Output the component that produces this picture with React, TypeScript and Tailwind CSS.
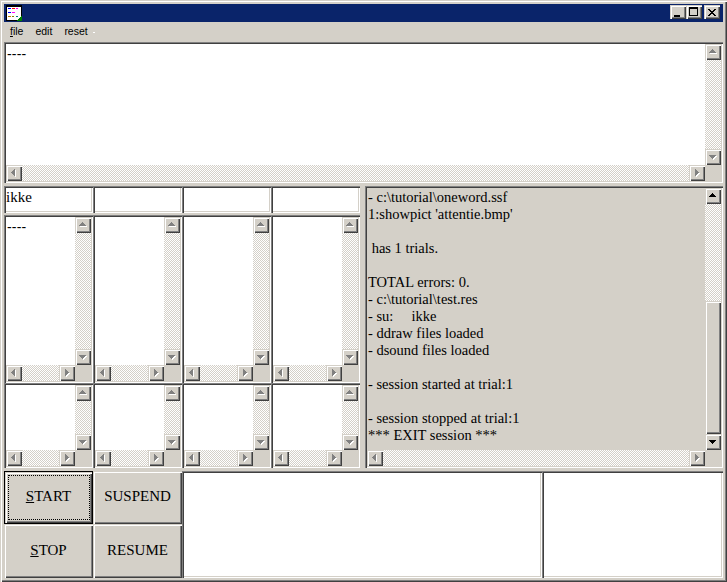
import React from 'react';

const sunken =
  'shadow-[inset_1px_1px_0_#808080,inset_2px_2px_0_#404040,inset_-1px_-1px_0_#ffffff,inset_-2px_-2px_0_#d4d0c8]';
const raised =
  'shadow-[inset_1px_1px_0_#d4d0c8,inset_2px_2px_0_#ffffff,inset_-1px_-1px_0_#404040,inset_-2px_-2px_0_#808080]';
const dither = 'bg-[repeating-conic-gradient(#ffffff_0_25%,#d4d0c8_0_50%)] bg-[length:2px_2px]';

type Dir = 'up' | 'down' | 'left' | 'right';

const rotation: Record<Dir, number> = { up: 0, right: 90, down: 180, left: 270 };

const Triangle = ({ dir, fill }: { dir: Dir; fill: string }) => (
  <g transform={`rotate(${rotation[dir]} 7.5 7.5)`} fill={fill}>
    <rect x="7" y="5" width="1" height="1" />
    <rect x="6" y="6" width="3" height="1" />
    <rect x="5" y="7" width="5" height="1" />
    <rect x="4" y="8" width="7" height="1" />
  </g>
);

const ArrowButton = ({ dir, active = false }: { dir: Dir; active?: boolean }) => (
  <div className={`w-4 h-4 shrink-0 bg-[#d4d0c8] ${raised}`}>
    <svg width="16" height="16" viewBox="0 0 16 16" shapeRendering="crispEdges">
      {!active && (
        <g transform="translate(1 1)">
          <Triangle dir={dir} fill="#ffffff" />
        </g>
      )}
      <Triangle dir={dir} fill={active ? '#000000' : '#808080'} />
    </svg>
  </div>
);

const VScrollBar = ({ active = false }: { active?: boolean }) => (
  <div className="w-4 shrink-0 flex flex-col">
    <ArrowButton dir="up" active={active} />
    {active ? (
      <>
        <div className={`h-[97px] ${dither}`} />
        <div className={`flex-1 bg-[#d4d0c8] ${raised}`} />
      </>
    ) : (
      <div className={`flex-1 ${dither}`} />
    )}
    <ArrowButton dir="down" active={active} />
  </div>
);

const ScrollBox = ({
  children,
  className = '',
  active = false,
  bg = 'bg-white',
}: {
  children?: React.ReactNode;
  className?: string;
  active?: boolean;
  bg?: string;
}) => (
  <div className={`p-[2px] flex flex-col ${sunken} ${className}`}>
    <div className="flex flex-1 min-h-0">
      <div className={`flex-1 min-w-0 overflow-hidden ${bg}`}>{children}</div>
      <VScrollBar active={active} />
    </div>
    <div className="flex h-4 shrink-0">
      <ArrowButton dir="left" />
      <div className={`flex-1 ${dither}`} />
      <ArrowButton dir="right" />
      <div className="w-4 bg-[#d4d0c8]" />
    </div>
  </div>
);

const Dashes = () => (
  <div className="pl-[1px] pt-[2px] text-[14px] leading-[17px] tracking-[0.2px] font-['Liberation_Sans',sans-serif] text-black">
    ----
  </div>
);

const SunkenField = ({ className = '', children }: { className?: string; children?: React.ReactNode }) => (
  <div className={`p-[2px] ${sunken} ${className}`}>
    <div className="w-full h-full bg-white">{children}</div>
  </div>
);

const TitleButton = ({ children, className = '' }: { children: React.ReactNode; className?: string }) => (
  <div className={`w-4 h-[14px] bg-[#d4d0c8] ${raised} ${className}`}>
    <svg width="16" height="14" viewBox="0 0 16 14" shapeRendering="crispEdges">
      {children}
    </svg>
  </div>
);

const AppIcon = () => (
  <svg width="16" height="16" viewBox="0 0 16 16" shapeRendering="crispEdges">
    <rect x="0.5" y="0.5" width="15" height="15" fill="#ffffff" stroke="#000000" />
    <rect x="1" y="1" width="14" height="1" fill="#000000" />
    <rect x="2" y="3" width="3" height="1" fill="#0000ff" />
    <rect x="6" y="3" width="3" height="1" fill="#ff0000" />
    <rect x="10" y="3" width="2" height="1" fill="#ff00ff" />
    <rect x="2" y="7" width="3" height="1" fill="#0000ff" />
    <rect x="6" y="7" width="3" height="1" fill="#ff00ff" />
    <rect x="2" y="11" width="3" height="1" fill="#c08000" />
    <rect x="6" y="11" width="2" height="1" fill="#808000" />
    <rect x="10" y="11" width="2" height="1" fill="#008080" />
    <path d="M16 10 V16 H10 Z" fill="#008000" />
  </svg>
);

const logLines = [
  '- c:\\tutorial\\oneword.ssf',
  "1:showpict 'attentie.bmp'",
  '',
  ' has 1 trials.',
  '',
  'TOTAL errors: 0.',
  '- c:\\tutorial\\test.res',
  '- su:     ikke',
  '- ddraw files loaded',
  '- dsound files loaded',
  '',
  '- session started at trial:1',
  '',
  '- session stopped at trial:1',
  '*** EXIT session ***',
];

const columns = [0, 1, 2, 3];

const CommandButton = ({
  label,
  hotkey,
  isDefault = false,
}: {
  label: string;
  hotkey?: string;
  isDefault?: boolean;
}) => (
  <div className={`h-full ${isDefault ? 'border border-black' : ''}`}>
    <div className={`h-full pb-[2px] flex items-center justify-center bg-[#d4d0c8] ${raised}`}>
      {isDefault ? (
        <div className="w-[82px] h-[45px] mt-[2px] pb-[2px] border border-dotted border-black flex items-center justify-center">
          <span>
            <span className="underline">{hotkey}</span>
            {label}
          </span>
        </div>
      ) : (
        <span>
          {hotkey && <span className="underline">{hotkey}</span>}
          {label}
        </span>
      )}
    </div>
  </div>
);

export default function App() {
  return (
    <div className="w-[727px] h-[582px] p-1 flex flex-col bg-[#d4d0c8] overflow-hidden shadow-[inset_1px_1px_0_#d4d0c8,inset_2px_2px_0_#ffffff,inset_-1px_-1px_0_#404040,inset_-2px_-2px_0_#808080]">
      <div className="h-[18px] shrink-0 flex items-start justify-between pt-[1px] pl-[2px] pr-[3px] bg-[#0a246a]">
        <AppIcon />
        <div className="flex">
          <TitleButton>
            <rect x="4" y="10" width="6" height="2" fill="#000000" />
          </TitleButton>
          <TitleButton>
            <path d="M3 2 H12 V11 H3 Z M4 4 V10 H11 V4 Z" fill="#000000" fillRule="evenodd" />
          </TitleButton>
          <TitleButton className="ml-[2px]">
            {[0, 1, 2, 3, 4, 5, 6].map((i) => (
              <g key={i} fill="#000000">
                <rect x={4 + i} y={4 + i} width="2" height="1" />
                <rect x={10 - i} y={4 + i} width="2" height="1" />
              </g>
            ))}
          </TitleButton>
        </div>
      </div>

      <div className="h-5 shrink-0 flex items-center pl-[6px] gap-3 text-[10.5px] font-['Liberation_Sans',sans-serif] text-black">
        <span>
          <span className="underline">f</span>ile
        </span>
        <span>edit</span>
        <span>reset</span>
        <div className="w-[2px] h-[1px] -ml-[7px] bg-white" />
      </div>

      <ScrollBox className="h-[141px] shrink-0">
        <Dashes />
      </ScrollBox>

      <div className="h-[282px] shrink-0 mt-[3px] flex gap-[5px]">
        <div className="w-[356px] shrink-0 flex flex-col">
          <div className="h-[28px] mb-[1px] shrink-0 grid grid-cols-4">
            <SunkenField className="h-[27px]">
              <div className="text-[15px] leading-[18px] font-['Liberation_Serif',serif] text-black">ikke</div>
            </SunkenField>
            <SunkenField className="h-[27px]" />
            <SunkenField className="h-[27px]" />
            <SunkenField className="h-[27px]" />
          </div>
          <div className="h-[168px] shrink-0 grid grid-cols-4">
            {columns.map((col) => (
              <ScrollBox key={col}>{col === 0 && <Dashes />}</ScrollBox>
            ))}
          </div>
          <div className="flex-1 grid grid-cols-4">
            {columns.map((col) => (
              <ScrollBox key={col} />
            ))}
          </div>
        </div>

        <ScrollBox className="flex-1" bg="bg-[#d4d0c8]" active>
          <div className="pl-[1px] pt-[1px] text-[14.5px] leading-[17px] font-['Liberation_Serif',serif] text-black whitespace-pre">
            {logLines.map((line, i) => (
              <div key={i} className="h-[17px]">
                {line}
              </div>
            ))}
          </div>
        </ScrollBox>
      </div>

      <div className="h-[107px] shrink-0 mt-[3px] flex text-[15px] font-['Liberation_Serif',serif] text-black">
        <div className="w-[178px] shrink-0 grid grid-cols-[89px_89px] grid-rows-[53px_54px]">
          <CommandButton label="TART" hotkey="S" isDefault />
          <CommandButton label="SUSPEND" />
          <CommandButton label="TOP" hotkey="S" />
          <CommandButton label="RESUME" />
        </div>
        <SunkenField className="w-[360px] shrink-0" />
        <SunkenField className="flex-1" />
      </div>
    </div>
  );
}
